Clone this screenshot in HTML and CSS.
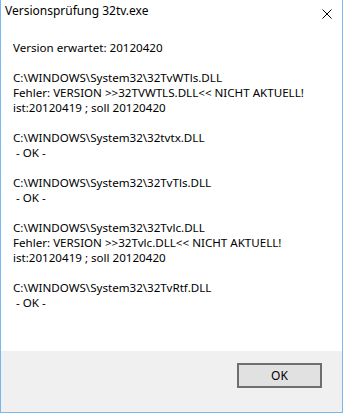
FILE: index.html
```html
<!DOCTYPE html>
<html lang="de">
<head>
<meta charset="UTF-8">
<title>Versionsprüfung 32tv.exe</title>
<link rel="stylesheet" href="styles.css">
</head>
<body>

<div class="window">
  <div class="titlebar">
    <span class="title">Versionsprüfung 32tv.exe</span>
    <svg class="close" width="10" height="10" viewBox="0 0 10 10">
      <path d="M0.5 0.5 L9.5 9.5 M9.5 0.5 L0.5 9.5" stroke="#000" stroke-width="1" fill="none"/>
    </svg>
  </div>

  <div class="content">
    <pre class="report">Version erwartet: 20120420

C:\WINDOWS\System32\32TvWTls.DLL
Fehler: VERSION &gt;&gt;32TVWTLS.DLL&lt;&lt; NICHT AKTUELL!
ist:20120419 ; soll 20120420

C:\WINDOWS\System32\32tvtx.DLL
 - OK -

C:\WINDOWS\System32\32TvTls.DLL
 - OK -

C:\WINDOWS\System32\32Tvlc.DLL
Fehler: VERSION &gt;&gt;32Tvlc.DLL&lt;&lt; NICHT AKTUELL!
ist:20120419 ; soll 20120420

C:\WINDOWS\System32\32TvRtf.DLL
 - OK -</pre>
  </div>

  <div class="footer">
    <button class="btn">OK</button>
  </div>
</div>

</body>
</html>
```

FILE: styles.css
```css
body {
  margin: 0;
  font-family: "Noto Sans", "Open Sans", sans-serif;
  font-size: 12px;
  color: #000;
  background: #fff;
}

.window {
  width: 343px;
  height: 413px;
  box-sizing: border-box;
  border: 1px solid #7ab7ee;
  border-top: none;
  display: flex;
  flex-direction: column;
  background: #fff;
}

.titlebar {
  height: 30px;
  display: flex;
  align-items: flex-start;
  justify-content: space-between;
  padding: 2px 10px 0 4px;
}

.title {
  line-height: 18px;
}

.close {
  margin-top: 7px;
}

.content {
  flex: 1;
  padding: 8px 12px 0;
}

.report {
  margin: 0;
  font-family: inherit;
  font-size: 11.6px;
  line-height: 15px;
  white-space: pre;
}

.footer {
  height: 49px;
  background: #f0f0f0;
  display: flex;
  justify-content: flex-end;
  align-items: flex-start;
  padding: 12px 20px 0 0;
}

.btn {
  width: 85px;
  height: 25px;
  box-sizing: border-box;
  border: 2px solid #6e6e6e;
  background: #e1e1e1;
  font-family: inherit;
  font-size: 12px;
  color: #000;
  padding: 0;
}
```
